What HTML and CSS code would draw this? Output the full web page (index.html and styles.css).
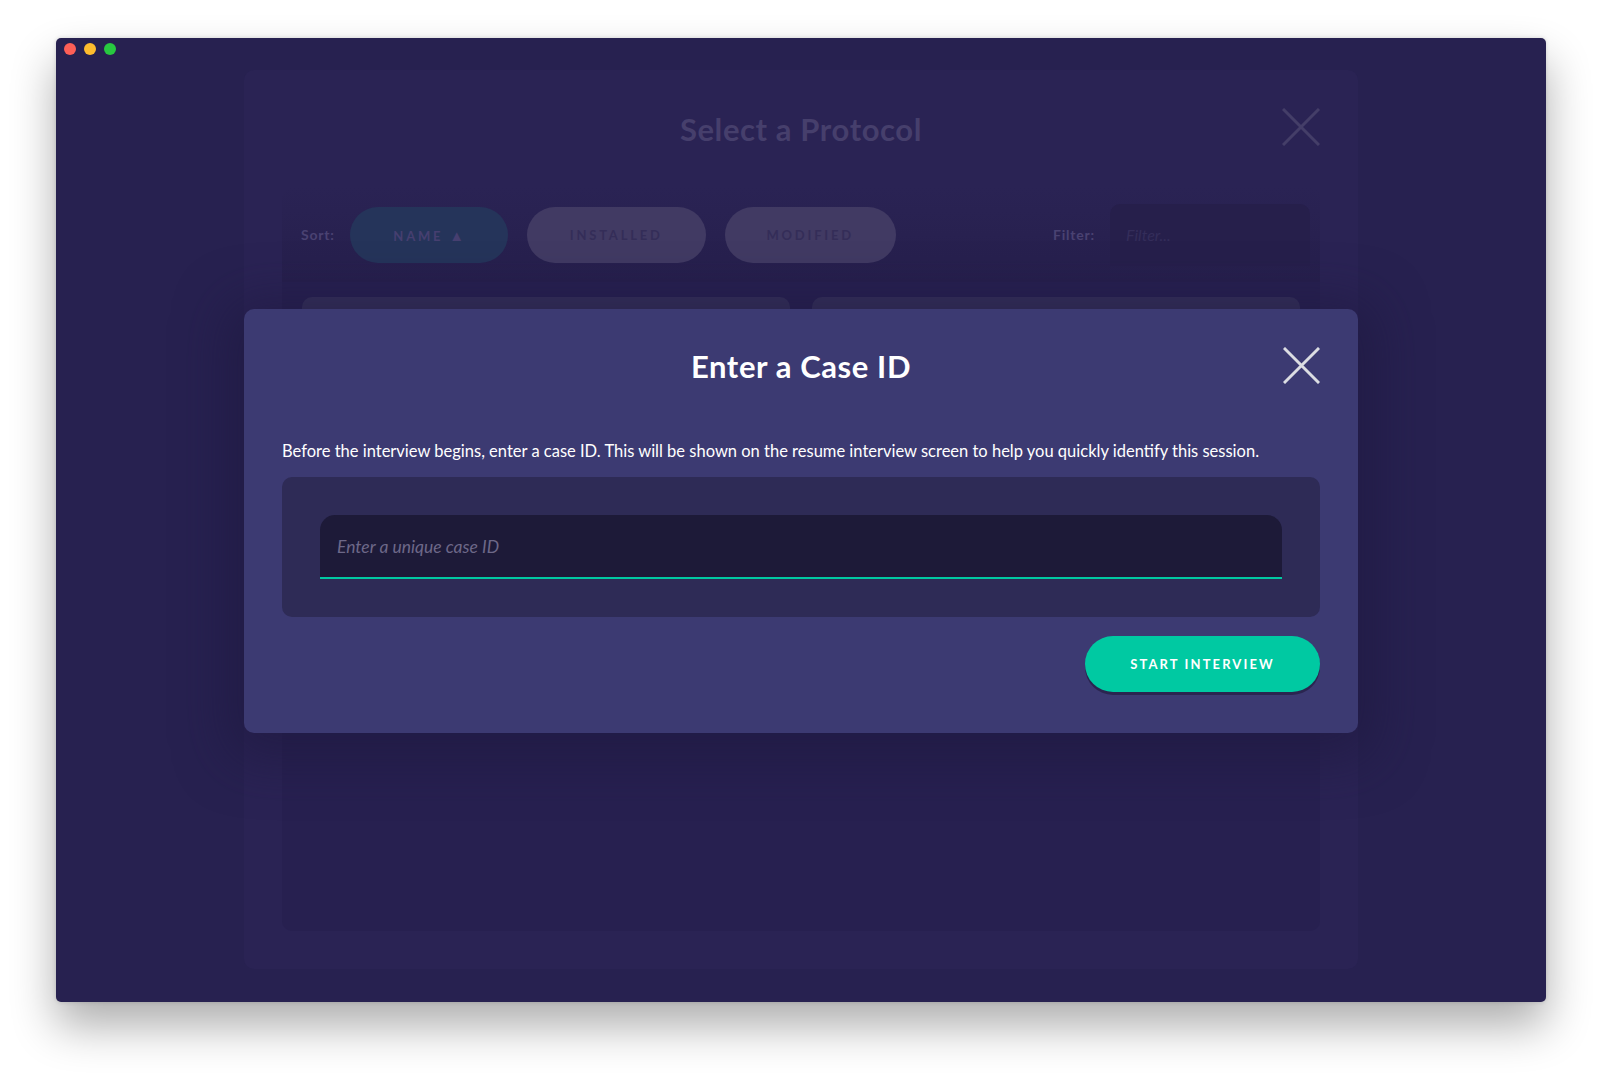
FILE: index.html
```html
<!DOCTYPE html>
<html lang="en">
<head>
  <meta charset="UTF-8">
  <title>Enter a Case ID</title>
  <link rel="stylesheet" href="styles.css">
</head>
<body>
  <div class="window">
    <div class="traffic">
      <span class="dot red"></span>
      <span class="dot yellow"></span>
      <span class="dot green"></span>
    </div>

    <!-- protocol picker, dimmed behind the modal -->
    <div class="panel">
      <div class="panel-head">
        <h2>Select a Protocol</h2>
        <svg class="close dim" viewBox="0 0 38 38"><path d="M1 1 L37 37 M37 1 L1 37"/></svg>
      </div>

      <div class="toolbar">
        <span class="label">Sort:</span>
        <button class="sort active">NAME <span class="arrow">&#9650;</span></button>
        <button class="sort wide">INSTALLED</button>
        <button class="sort">MODIFIED</button>
        <span class="spacer"></span>
        <span class="label">Filter:</span>
        <div class="filter">Filter...</div>
      </div>

      <div class="list">
        <div class="card"></div>
        <div class="card"></div>
      </div>
    </div>

    <div class="modal">
      <div class="modal-head">
        <h1>Enter a Case ID</h1>
        <svg class="close" viewBox="0 0 38 38"><path d="M1 1 L37 37 M37 1 L1 37"/></svg>
      </div>
      <p class="intro">Before the interview begins, enter a case ID. This will be shown on the resume interview screen to help you quickly identify this session.</p>
      <div class="field-box">
        <input type="text" class="case-input" placeholder="Enter a unique case ID">
      </div>
      <div class="actions">
        <button class="start">START INTERVIEW</button>
      </div>
    </div>
  </div>
</body>
</html>
```

FILE: styles.css
```css
html {
  background-color: #fff;
}

body {
  margin: 0;
  padding: 38px 56px;
  min-height: 1077px;
  box-sizing: border-box;
  background-color: #fff;
  font-family: 'Lato', 'Noto Sans', sans-serif;
}

.window {
  position: relative;
  width: 1490px;
  height: 964px;
  border-radius: 5px;
  background-color: #272150;
  box-shadow: 0 24px 45px rgba(0, 0, 0, 0.32), 0 0 4px rgba(0, 0, 0, 0.15);
  overflow: hidden;
  padding-top: 32px;
  box-sizing: border-box;
}

.traffic {
  position: absolute;
  top: 5px;
  left: 8px;
  display: flex;
  gap: 8px;
}

.dot {
  width: 12px;
  height: 12px;
  border-radius: 50%;
}

.red { background-color: #fe5f57; }
.yellow { background-color: #febc2e; }
.green { background-color: #28c840; }

/* background panel */
.panel {
  width: 1114px;
  height: 899px;
  margin: 0 auto;
  background-color: #2a2354;
  border-radius: 10px;
  display: flex;
  flex-direction: column;
}

.panel-head {
  position: relative;
  height: 117px;
  display: flex;
  align-items: center;
  justify-content: center;
}

.panel-head h2 {
  margin: 0;
  font-size: 31px;
  font-weight: 700;
  color: #463f6c;
  letter-spacing: 0.6px;
}

.close {
  width: 38px;
  height: 38px;
  fill: none;
  stroke: #dcdde3;
  stroke-width: 3;
}

.close.dim {
  position: absolute;
  right: 38px;
  top: 38px;
  stroke: #443e68;
}

.toolbar {
  margin: 0 38px;
  height: 95px;
  padding: 0 16px 0 19px;
  display: flex;
  align-items: center;
  background: linear-gradient(#2a2354, #261f4c);
  border-radius: 10px 10px 0 0;
}

.label {
  font-size: 14px;
  font-weight: 700;
  color: #4a4272;
  letter-spacing: 0.8px;
  margin-right: 15px;
}

.sort {
  height: 56px;
  width: 171px;
  margin-right: 19px;
  border: none;
  border-radius: 28px;
  background-color: #413a63;
  color: #342d58;
  font-family: inherit;
  font-size: 13px;
  font-weight: 700;
  letter-spacing: 2.8px;
}

.sort .arrow {
  font-size: 15px;
  letter-spacing: 0;
}

.sort.active {
  width: 158px;
  background-color: #25345a;
  color: #463f70;
}

.sort.wide {
  width: 179px;
}

.spacer {
  flex: 1;
}

.filter {
  width: 200px;
  height: 62px;
  line-height: 62px;
  padding-left: 16px;
  margin-right: -6px;
  box-sizing: border-box;
  background-color: #261f4b;
  border-radius: 10px 10px 0 0;
  color: #342d5a;
  font-style: italic;
  font-size: 16px;
}

.list {
  flex: 1;
  margin: 0 38px 38px;
  padding: 15px 20px;
  display: flex;
  gap: 22px;
  background-color: #272050;
  border-radius: 0 0 10px 10px;
}

.card {
  flex: 1;
  height: 300px;
  background-color: #35305a;
  border-radius: 10px;
}

/* modal */
.modal {
  position: absolute;
  top: 271px;
  left: 188px;
  width: 1114px;
  box-sizing: border-box;
  padding: 38px 38px 41px;
  background-color: #3c3a72;
  border-radius: 10px;
  box-shadow: 0 10px 50px 18px rgba(30, 24, 62, 0.55);
}

.modal-head {
  position: relative;
  height: 37px;
  display: flex;
  align-items: center;
  justify-content: center;
}

.modal-head h1 {
  margin: 0;
  font-size: 31px;
  font-weight: 700;
  color: #fff;
  letter-spacing: 0.6px;
}

.modal-head .close {
  position: absolute;
  right: 0;
  top: 0;
  width: 37px;
  height: 37px;
}

.intro {
  margin: 55px 0 14px;
  font-size: 16.5px;
  line-height: 24px;
  color: #fff;
}

.field-box {
  padding: 38px;
  background-color: #2e2b56;
  border-radius: 10px;
}

.case-input {
  display: block;
  width: 100%;
  height: 64px;
  box-sizing: border-box;
  padding: 0 17px;
  border: none;
  border-bottom: 2px solid #00c9a2;
  border-radius: 15px 15px 0 0;
  background-color: #1d1a38;
  color: #fff;
  font-family: inherit;
  font-size: 17.5px;
  font-style: italic;
  outline: none;
}

.case-input::placeholder {
  color: #6d6888;
}

.actions {
  display: flex;
  justify-content: flex-end;
  margin-top: 19px;
}

.start {
  width: 235px;
  height: 56px;
  border: none;
  border-radius: 28px;
  background-color: #00c9a2;
  color: #fff;
  font-family: inherit;
  font-size: 13px;
  font-weight: 700;
  letter-spacing: 2.1px;
  box-shadow: 0 3px 0 #2a2550;
}
```
